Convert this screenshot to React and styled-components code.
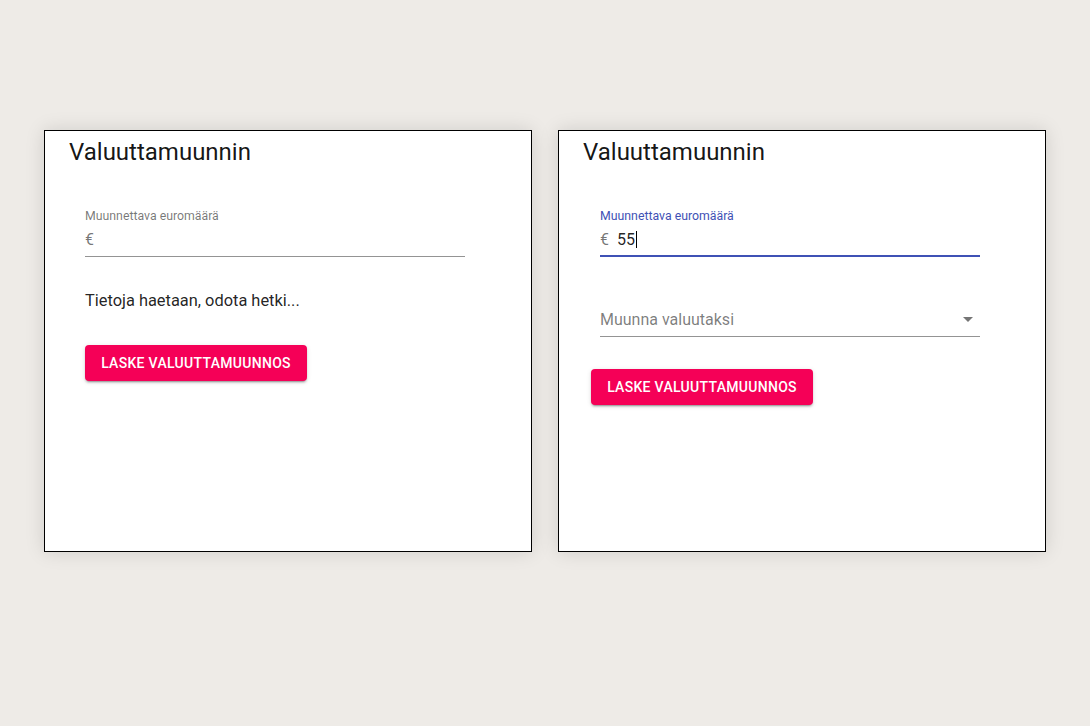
import React from "react";
import styled, { createGlobalStyle } from "styled-components";

const GlobalStyle = createGlobalStyle`
  html, body {
    margin: 0;
    padding: 0;
    background: #eeebe7;
    font-family: Roboto, "Liberation Sans", Arial, sans-serif;
  }
`;

const Page = styled.div`
  display: flex;
  justify-content: center;
  gap: 26px;
  padding-top: 130px;
  min-height: 726px;
  box-sizing: border-box;
`;

const Card = styled.section`
  box-sizing: border-box;
  width: 488px;
  height: 422px;
  background: #fff;
  border: 1px solid #000;
  box-shadow: 0 0 18px rgba(0, 0, 0, 0.13);
  padding: 5px 24px;
`;

const Title = styled.h2`
  margin: 0;
  font-size: 24px;
  font-weight: 400;
  line-height: 32px;
  color: rgba(0, 0, 0, 0.92);
`;

const Field = styled.div`
  width: 380px;
  margin-left: ${(p) => p.$indent}px;
  margin-top: ${(p) => p.$top}px;
`;

const Label = styled.label`
  display: block;
  font-size: 12.3px;
  line-height: 12px;
  margin-bottom: 2px;
  color: ${(p) => (p.$focused ? "#3f51b5" : "rgba(0, 0, 0, 0.54)")};
`;

const InputRow = styled.div`
  display: flex;
  align-items: center;
  font-size: 16px;
  line-height: 19px;
  padding: 6px 0 ${(p) => (p.$focused ? 6 : 7)}px;
  border-bottom: ${(p) =>
    p.$focused ? "2px solid #3f51b5" : "1px solid rgba(0, 0, 0, 0.42)"};
`;

const Adornment = styled.span`
  color: rgba(0, 0, 0, 0.54);
  margin-right: 8px;
`;

const Value = styled.span`
  color: rgba(0, 0, 0, 0.87);
`;

const Caret = styled.span`
  display: inline-block;
  width: 1px;
  height: 17px;
  background: #000;
  margin-left: 1px;
  vertical-align: -3px;
`;

const SelectRow = styled(InputRow)`
  justify-content: space-between;
  color: rgba(0, 0, 0, 0.52);
  padding-right: 7px;
`;

const Arrow = styled.span`
  width: 0;
  height: 0;
  border-left: 5px solid transparent;
  border-right: 5px solid transparent;
  border-top: 5px solid rgba(0, 0, 0, 0.54);
`;

const Message = styled.p`
  margin: 32px 0 0 16px;
  font-size: 16.4px;
  line-height: 24px;
  color: rgba(0, 0, 0, 0.87);
`;

const Button = styled.button`
  display: block;
  margin-top: 32px;
  margin-left: ${(p) => p.$indent}px;
  height: 36px;
  width: 222px;
  padding: 0;
  white-space: nowrap;
  border: none;
  border-radius: 4px;
  background: #f50057;
  color: #fff;
  font-family: inherit;
  font-size: 14px;
  font-weight: 500;
  letter-spacing: 0.3px;
  text-transform: uppercase;
  box-shadow: 0 3px 1px -2px rgba(0, 0, 0, 0.2), 0 2px 2px 0 rgba(0, 0, 0, 0.14),
    0 1px 5px 0 rgba(0, 0, 0, 0.12);
  cursor: pointer;
`;

export default function App() {
  return (
    <>
      <GlobalStyle />
      <Page>
        <Card>
          <Title>Valuuttamuunnin</Title>
          <Field $indent={16} $top={42}>
            <Label>Muunnettava euromäärä</Label>
            <InputRow>
              <Adornment>€</Adornment>
            </InputRow>
          </Field>
          <Message>Tietoja haetaan, odota hetki...</Message>
          <Button $indent={16}>Laske valuuttamuunnos</Button>
        </Card>
        <Card>
          <Title>Valuuttamuunnin</Title>
          <Field $indent={17} $top={42}>
            <Label $focused>Muunnettava euromäärä</Label>
            <InputRow $focused>
              <Adornment>€</Adornment>
              <Value>55</Value>
              <Caret />
            </InputRow>
          </Field>
          <Field $indent={17} $top={47}>
            <SelectRow>
              <span>Muunna valuutaksi</span>
              <Arrow />
            </SelectRow>
          </Field>
          <Button $indent={8}>Laske valuuttamuunnos</Button>
        </Card>
      </Page>
    </>
  );
}
